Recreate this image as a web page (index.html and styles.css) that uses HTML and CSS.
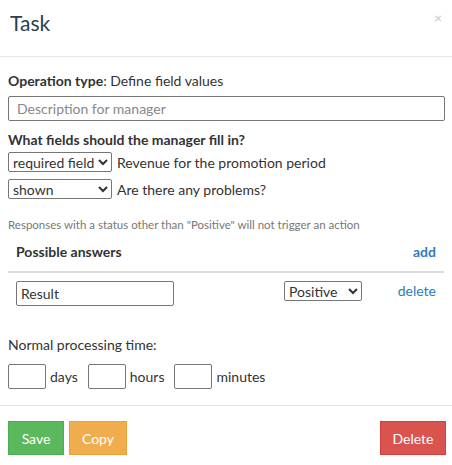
FILE: index.html
```html
<!DOCTYPE html>
<html>
<head>
<meta charset="utf-8">
<link rel="stylesheet" href="styles.css">
</head>
<body>
<div class="modal">
  <div class="modal-header">
    <h4 class="title">Task</h4>
    <span class="close">×</span>
  </div>
  <div class="modal-body">
    <div class="op"><b>Operation type</b>: Define field values</div>
    <input class="desc" type="text" placeholder="Description for manager">
    <div class="q"><b>What fields should the manager fill in?</b></div>
    <div class="field-row">
      <select class="sel"><option>required field</option></select>
      <span>Revenue for the promotion period</span>
    </div>
    <div class="field-row">
      <select class="sel"><option>shown</option></select>
      <span>Are there any problems?</span>
    </div>
    <div class="hint">Responses with a status other than "Positive" will not trigger an action</div>
    <div class="answers">
      <div class="answers-head">
        <span class="ah-title">Possible answers</span>
        <a class="add">add</a>
      </div>
      <div class="answer-row">
        <input class="result" type="text" value="Result">
        <select class="status"><option>Positive</option></select>
        <a class="delete">delete</a>
      </div>
    </div>
    <div class="time-label">Normal processing time:</div>
    <div class="time-row">
      <input class="tbox" type="text"><span>days</span>
      <input class="tbox" type="text"><span>hours</span>
      <input class="tbox" type="text"><span>minutes</span>
    </div>
  </div>
  <div class="modal-footer">
    <button class="btn save">Save</button>
    <button class="btn copy">Copy</button>
    <span class="spacer"></span>
    <button class="btn del">Delete</button>
  </div>
</div>
</body>
</html>
```
FILE: styles.css
```css
* { box-sizing: border-box; }
body {
  margin: 0;
  font-family: Lato, "Open Sans", sans-serif;
  font-size: 14px;
  color: #333;
  background: #fff;
}
.modal { width: 452px; }
.modal-header {
  height: 57px;
  border-bottom: 1px solid #e5e5e5;
  display: flex;
  justify-content: space-between;
  padding: 9px 10px 0 10px;
}
.title {
  margin: 0;
  font-size: 21px;
  font-weight: 400;
  color: #2c3e50;
  line-height: 28px;
}
.close {
  color: #c8c8c8;
  font-size: 14px;
  line-height: 14px;
  margin-top: 2px;
}
.modal-body { padding: 15px 8px 0 8px; }
.op { line-height: 18px; }
.desc {
  display: block;
  width: 437px;
  height: 25px;
  margin-top: 6px;
  border: 1px solid #767676;
  border-radius: 2px;
  padding: 0 8px;
  font: inherit;
  font-size: 14px;
}
.desc::placeholder { color: #888; }
.q { margin-top: 10px; line-height: 18px; }
.field-row {
  display: flex;
  align-items: center;
  gap: 5px;
  margin-top: 3px;
  height: 20px;
}
.field-row + .field-row { margin-top: 7px; }
.sel {
  width: 104px;
  height: 20px;
  font: inherit;
  font-size: 14px;
  border: 1px solid #767676;
  border-radius: 2px;
  background: #fff;
  color: #333;
}
.hint {
  margin-top: 19px;
  font-size: 11.5px;
  color: #777;
  line-height: 14px;
}
.answers { margin-top: 1px; }
.answers-head {
  display: flex;
  justify-content: space-between;
  padding: 0 8px;
  border-bottom: 2px solid #ddd;
  font-weight: bold;
  line-height: 18px;
  height: 40px;
  align-items: center;
}
.add { color: #337ab7; font-weight: bold; }
.answer-row {
  display: flex;
  align-items: flex-start;
  padding: 8px 8px 0 8px;
}
.result {
  width: 158px;
  height: 25px;
  border: 1px solid #767676;
  border-radius: 2px;
  padding: 0 4px;
  font: inherit;
  font-size: 14px;
  color: #333;
}
.status {
  margin-left: 110px;
  width: 78px;
  height: 20px;
  font: inherit;
  font-size: 14px;
  border: 1px solid #767676;
  border-radius: 2px;
  background: #fff;
  color: #333;
}
.delete { margin-left: auto; color: #337ab7; line-height: 20px; }
.time-label { margin-top: 30px; line-height: 18px; }
.time-row {
  display: flex;
  align-items: center;
  margin-top: 10px;
  gap: 4px;
}
.tbox {
  width: 38px;
  height: 25px;
  border: 1px solid #767676;
  border-radius: 2px;
}
.time-row span { margin-right: 6px; }
.modal-footer {
  margin-top: 16px;
  border-top: 1px solid #e5e5e5;
  padding: 15px 6px 0 8px;
  display: flex;
  gap: 5px;
}
.spacer { flex: 1; }
.btn {
  height: 34px;
  border: 1px solid transparent;
  border-radius: 0;
  color: #fff;
  font: inherit;
  font-size: 14px;
  padding: 0 8px;
}
.save { background: #5cb85c; border-color: #4cae4c; width: 56px; }
.copy { background: #f0ad4e; border-color: #eea236; width: 58px; }
.del { background: #d9534f; border-color: #d43f3a; width: 66px; }
```
